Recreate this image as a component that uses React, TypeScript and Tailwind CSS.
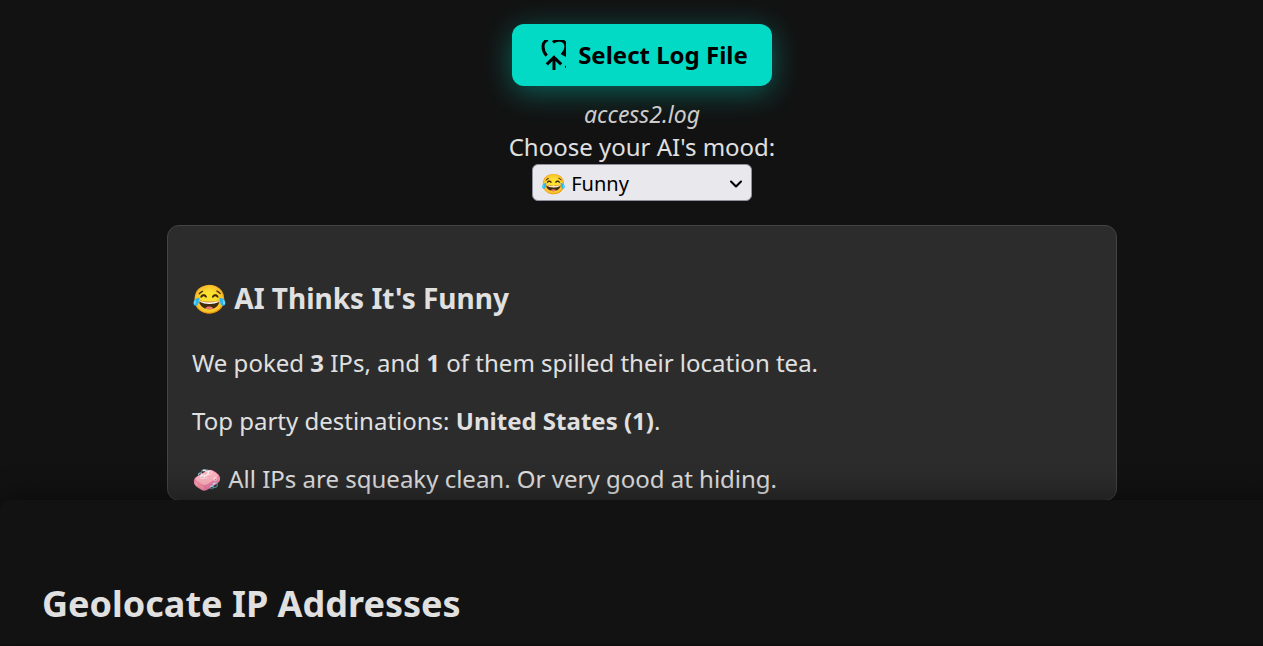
import { useRef, useState } from "react";
import { ChevronDown } from "lucide-react";

const moods = [
  { id: "funny", label: "😂 Funny" },
  { id: "serious", label: "🧐 Serious" },
  { id: "angry", label: "😡 Angry" },
];

function UploadIcon() {
  return (
    <svg
      className="size-[30px] shrink-0 overflow-hidden"
      viewBox="0 0 30 30"
      fill="none"
      stroke="currentColor"
      strokeWidth="3"
      aria-hidden="true"
    >
      <path d="M10.6 15.8C8.2 12.8 7 9.4 7 6.4C7 3.6 8.6 1 11.8 -0.4" />
      <path d="M17 2.4C20 -0.2 25.4 -0.6 28 1.8C30.2 4 30.2 7.6 29 10.4C28.4 12 27.6 13 26.6 13.8" />
      <path d="M25 13.8L31 10.6V17Z" fill="currentColor" strokeWidth="1" />
      <path d="M18 31V18M10.8 24.4L18 17.4L25.2 24.4" />
      <path d="M29 26.8H30" strokeWidth="2" />
    </svg>
  );
}

export default function App() {
  const [mood, setMood] = useState("funny");
  const [fileName, setFileName] = useState("access2.log");
  const fileRef = useRef<HTMLInputElement>(null);

  return (
    <div className="min-h-screen overflow-hidden bg-[#121212] font-['Noto_Sans',sans-serif] text-2xl leading-[34px] text-[#e0e0e0]">
      <main className="flex flex-col items-center pt-6 pr-[21px] pl-[42px]">
        <button
          type="button"
          onClick={() => fileRef.current?.click()}
          className="flex items-center gap-3 rounded-xl bg-[#03dac6] px-6 py-4 leading-[30px] font-bold text-black shadow-[0_6px_30px_rgba(3,218,198,0.4)]"
        >
          <UploadIcon />
          Select Log File
        </button>
        <input
          ref={fileRef}
          type="file"
          aria-label="Log file"
          className="hidden"
          onChange={(e) => setFileName(e.target.files?.[0]?.name ?? fileName)}
        />
        <span className="mt-3 text-[23px] leading-8 text-[#cccccc] italic">
          {fileName}
        </span>

        <label htmlFor="mood">Choose your AI's mood:</label>
        <div className="relative w-[220px]">
          <select
            id="mood"
            value={mood}
            onChange={(e) => setMood(e.target.value)}
            className="block h-[37px] w-full appearance-none rounded-md border border-[#8f8f9d] bg-[#e9e9ed] px-2 pt-0.5 text-xl leading-7 text-black"
          >
            {moods.map((m) => (
              <option key={m.id} value={m.id}>
                {m.label}
              </option>
            ))}
          </select>
          <ChevronDown
            className="pointer-events-none absolute top-2.5 right-1.5 size-5 text-black"
            strokeWidth={2.5}
          />
        </div>

        <section className="mt-6 w-full max-w-[950px] rounded-xl border border-[#444444] bg-[#2c2c2c] px-6 pt-[53px] pb-1">
          <h3 className="text-[28px] leading-[39px] font-bold">
            😂 AI Thinks It's Funny
          </h3>
          <p className="mt-7">
            We poked <strong>3</strong> IPs, and <strong>1</strong> of them
            spilled their location tea.
          </p>
          <p className="mt-6">
            Top party destinations: <strong>United States (1)</strong>.
          </p>
          <p className="mt-6">
            🧼 All IPs are squeaky clean. Or very good at hiding.
          </p>
        </section>
      </main>

      <section className="relative -mt-px -mr-6 rounded-t-xl bg-[#121212] px-[42px] pt-20 pb-4 shadow-[0_-4px_30px_rgba(0,0,0,0.4)]">
        <h2 className="text-4xl leading-[48px] font-bold">
          Geolocate IP Addresses
        </h2>
      </section>
    </div>
  );
}
